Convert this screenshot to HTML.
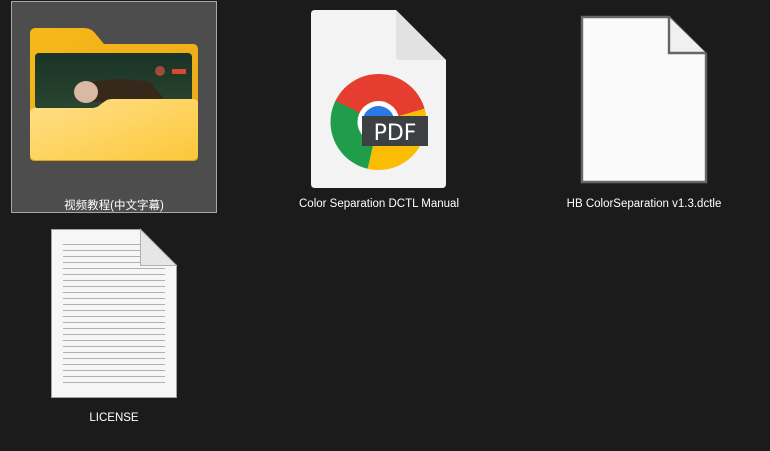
<!DOCTYPE html>
<html><head><meta charset="utf-8"><style>
html,body{margin:0;padding:0;background:#1b1b1b;width:770px;height:451px;overflow:hidden;position:relative;font-family:"Liberation Sans","Noto Sans CJK SC",sans-serif;}
.lbl{position:absolute;color:#fff;font-size:11.5px;text-align:center;white-space:nowrap;transform:translateX(-50%);}
svg{position:absolute;left:0;top:0}
</style></head><body>
<div style="position:absolute;left:11px;top:1px;width:204px;height:210px;background:#4d4d4d;border:1px solid #a8a8a8;"></div>
<svg width="770" height="451" viewBox="0 0 770 451">
<defs>
<linearGradient id="fb" x1="0" y1="0" x2="1" y2="1"><stop offset="0" stop-color="#f6b918"/><stop offset="1" stop-color="#e9a81c"/></linearGradient>
<linearGradient id="ff" x1="0" y1="0" x2="1" y2="1"><stop offset="0" stop-color="#ffe08a"/><stop offset="1" stop-color="#fcc83a"/></linearGradient>
<linearGradient id="ph" x1="0" y1="0" x2="0" y2="1"><stop offset="0" stop-color="#1a3326"/><stop offset="1" stop-color="#2a4530"/></linearGradient>
<clipPath id="cc"><circle cx="378.5" cy="122" r="48"/></clipPath>
</defs>
<path d="M30 34 Q30 28 36 28 L84 28 Q90 28 94 32 L104 44 L193 44 Q198 44 198 50 L198 155 Q198 160 193 160 L35 160 Q30 160 30 155 Z" fill="url(#fb)"/>
<rect x="35" y="53" width="157" height="56" rx="4" fill="url(#ph)"/>
<path d="M80 85 Q110 75 150 82 L165 100 L90 102 Z" fill="#3a2418" opacity="0.85"/>
<ellipse cx="86" cy="92" rx="12" ry="11" fill="#d9b8a4"/>
<circle cx="160" cy="71" r="5" fill="#a04a38"/>
<rect x="172" y="69" width="14" height="5" fill="#d8482c"/>
<path d="M30 113 Q30 108 35 108 L92 108 Q97 108 101 104 L104 102 Q107 99 112 99 L193 99 Q198 99 198 104 L198 155 Q198 160 193 160 L35 160 Q30 160 30 155 Z" fill="url(#ff)"/>
<path d="M30 155 Q30 160 35 160 L193 160 Q198 160 198 155 L198 157 Q198 161 193 161 L35 161 Q30 161 30 157Z" fill="#e0a020"/>
<path d="M315 10 L396 10 L446 60 L446 184 Q446 188 442 188 L315 188 Q311 188 311 184 L311 14 Q311 10 315 10Z" fill="#f3f3f3"/>
<path d="M396 10 L396 56 Q396 60 400 60 L446 60 Z" fill="#e2e2e2"/>
<g clip-path="url(#cc)">
<path d="M378.5 122 L330 100 L335 60 L425 60 L427 108 Z" fill="#e53e30"/>
<path d="M378.5 122 L427 108 L440 180 L365 180 Z" fill="#fbbc04"/>
<path d="M378.5 122 L365 180 L320 180 L320 95 L332 99 Z" fill="#1f9d4b"/>
</g>
<circle cx="378.5" cy="122" r="21" fill="#fff"/>
<circle cx="378.5" cy="122" r="16" fill="#2b7ae4"/>
<rect x="362" y="116" width="66" height="30" fill="#3c4043"/>
<text x="395" y="140" font-family="DejaVu Sans,sans-serif" font-size="22" fill="#fff" text-anchor="middle">PDF</text>
<path d="M582 17 L669 17 L706 54 L706 182 L582 182 Z" fill="#fafafa" stroke="#666" stroke-width="2.4"/>
<path d="M669 17 L669 53 L706 53" fill="#f0f0f0" stroke="#666" stroke-width="2.4"/>
<path d="M51.5 229.5 L140.5 229.5 L176.5 265.5 L176.5 397.5 L51.5 397.5 Z" fill="#f6f6f6" stroke="#a0a0a0"/>
<g stroke="#b0b0b0" stroke-width="1">
<path d="M63 244.5H140M63 250.5H140M63 256.5H140M63 262.5H140M63 268.5H165M63 274.5H165M63 280.5H165M63 286.5H165M63 292.5H165M63 298.5H165M63 304.5H165M63 310.5H165M63 316.5H165M63 322.5H165M63 328.5H165M63 334.5H165M63 340.5H165M63 346.5H165M63 352.5H165M63 358.5H165M63 364.5H165M63 370.5H165M63 376.5H165M63 382.5H165"/>
</g>
<path d="M140.5 229.5 L140.5 265.5 L176.5 265.5 Z" fill="#e6e6e6" stroke="#b0b0b0"/>
</svg>
<div class="lbl" style="left:114px;top:197px">视频教程(中文字幕)</div>
<div class="lbl" style="left:379px;top:198px">Color Separation DCTL Manual</div>
<div class="lbl" style="left:644px;top:198px">HB ColorSeparation v1.3.dctle</div>
<div class="lbl" style="left:114px;top:412px">LICENSE</div>
</body></html>
